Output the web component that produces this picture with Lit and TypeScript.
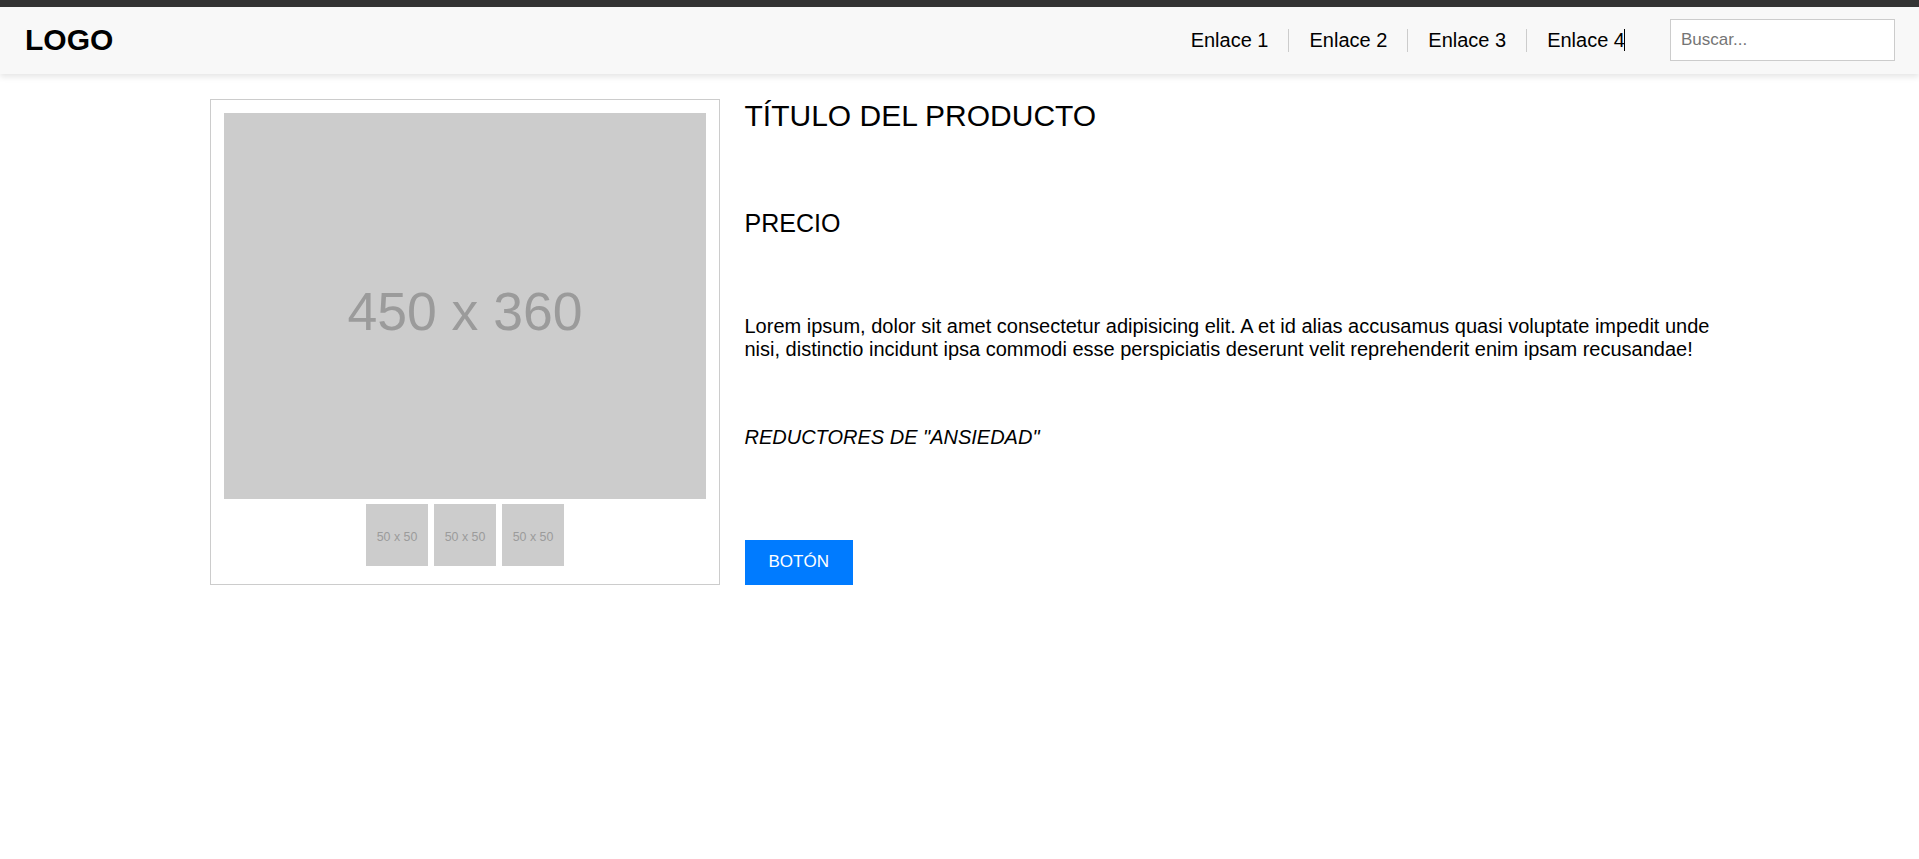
import { LitElement, html, css } from "lit";
import { customElement, property } from "lit/decorators.js";

const FONT = css`"Liberation Sans", Arial, Helvetica, sans-serif`;

@customElement("site-header")
class SiteHeader extends LitElement {
  static styles = css`
    :host {
      display: block;
      font-family: ${FONT};
    }
    .header {
      display: flex;
      align-items: center;
      justify-content: space-between;
      padding: 12px 24px 13px 25px;
      border-top: 7px solid #333;
      background: #f8f8f8;
      box-shadow: 0 3px 6px rgba(0, 0, 0, 0.1);
    }
    .logo {
      font-size: 30px;
      line-height: 34px;
      font-weight: bold;
      color: #000;
    }
    .tools {
      display: flex;
      align-items: center;
      gap: 25px;
    }
    .links {
      display: flex;
      margin: 0;
      padding: 0;
      list-style: none;
    }
    .item {
      padding: 0 20px;
      font-size: 20px;
      line-height: 23px;
    }
    .item + .item {
      border-left: 1px solid #ccc;
    }
    .link {
      position: relative;
      color: #000;
      text-decoration: none;
    }
    .caret::after {
      content: "";
      position: absolute;
      top: 0;
      right: 0;
      width: 1px;
      height: 100%;
      background: #000;
    }
    .search {
      box-sizing: border-box;
      width: 225px;
      height: 42px;
      padding: 0 10px;
      border: 1px solid #ccc;
      border-radius: 0;
      background: #fff;
      font-family: inherit;
      font-size: 17px;
    }
    .search::placeholder {
      color: #757575;
    }
  `;

  private links = ["Enlace 1", "Enlace 2", "Enlace 3", "Enlace 4"];

  render() {
    const last = this.links.length - 1;
    return html`
      <header class="header">
        <div class="logo">LOGO</div>
        <div class="tools">
          <nav>
            <ul class="links">
              ${this.links.map(
                (text, i) => html`<li class="item"><a class="link ${i === last ? "caret" : ""}" href="#">${text}</a></li>`
              )}
            </ul>
          </nav>
          <input class="search" type="text" placeholder="Buscar..." aria-label="Buscar" />
        </div>
      </header>
    `;
  }
}

@customElement("placeholder-image")
class PlaceholderImage extends LitElement {
  @property({ type: Number }) width = 50;
  @property({ type: Number }) height = 50;

  static styles = css`
    :host {
      display: block;
    }
    .picture {
      display: block;
      width: 100%;
      background: #ccc;
      font-family: ${FONT};
    }
    .large {
      font-size: 50px;
      fill: #9b9b9b;
    }
    .small {
      font-size: 10px;
      fill: #9b9b9b;
    }
  `;

  render() {
    const large = this.width > 100;
    const label = `${this.width} x ${this.height}`;
    return html`
      <svg class="picture" viewBox="0 0 ${this.width} ${this.height}" role="img" aria-label=${label}>
        <text class=${large ? "large" : "small"} x="50%" y=${this.height / 2 + (large ? 23 : 5)} text-anchor="middle">${label}</text>
      </svg>
    `;
  }
}

@customElement("app-root")
class AppRoot extends LitElement {
  static styles = css`
    :host {
      display: block;
      min-height: 100vh;
      background: #fff;
      color: #000;
      font-family: ${FONT};
      font-size: 20px;
      line-height: 23px;
    }
    .product {
      display: grid;
      grid-template-columns: 34% 1fr;
      gap: 25px;
      max-width: 1500px;
      margin: 25px auto;
    }
    .gallery {
      padding: 13px 13px 18px;
      border: 1px solid #ccc;
    }
    .thumbs {
      display: flex;
      justify-content: center;
      gap: 6px;
      margin-top: 5px;
    }
    .thumb {
      width: 62px;
    }
    .details {
      display: flex;
      flex-direction: column;
      align-items: flex-start;
      justify-content: space-between;
    }
    .title,
    .price {
      margin: 0 0 12px;
      font-weight: normal;
    }
    .title {
      font-size: 30px;
      line-height: 33px;
    }
    .price {
      font-size: 25px;
      line-height: 29px;
    }
    .text {
      margin: 0;
    }
    .action {
      margin-top: 25px;
      padding: 12px 24px 14px;
      border: 0;
      background: #007bff;
      color: #fff;
      font-family: inherit;
      font-size: 17px;
      line-height: 19px;
      cursor: pointer;
    }
  `;

  render() {
    return html`
      <site-header></site-header>
      <main class="product">
        <section class="gallery">
          <placeholder-image width="450" height="360"></placeholder-image>
          <div class="thumbs">
            ${[0, 1, 2].map(() => html`<placeholder-image class="thumb" width="50" height="50"></placeholder-image>`)}
          </div>
        </section>
        <section class="details">
          <h1 class="title">TÍTULO DEL PRODUCTO</h1>
          <h2 class="price">PRECIO</h2>
          <p class="text">
            Lorem ipsum, dolor sit amet consectetur adipisicing elit. A et id alias accusamus quasi voluptate impedit
            unde nisi, distinctio incidunt ipsa commodi esse perspiciatis deserunt velit reprehenderit enim ipsam
            recusandae!
          </p>
          <em>REDUCTORES DE "ANSIEDAD"</em>
          <button class="action" type="button">BOTÓN</button>
        </section>
      </main>
    `;
  }
}
